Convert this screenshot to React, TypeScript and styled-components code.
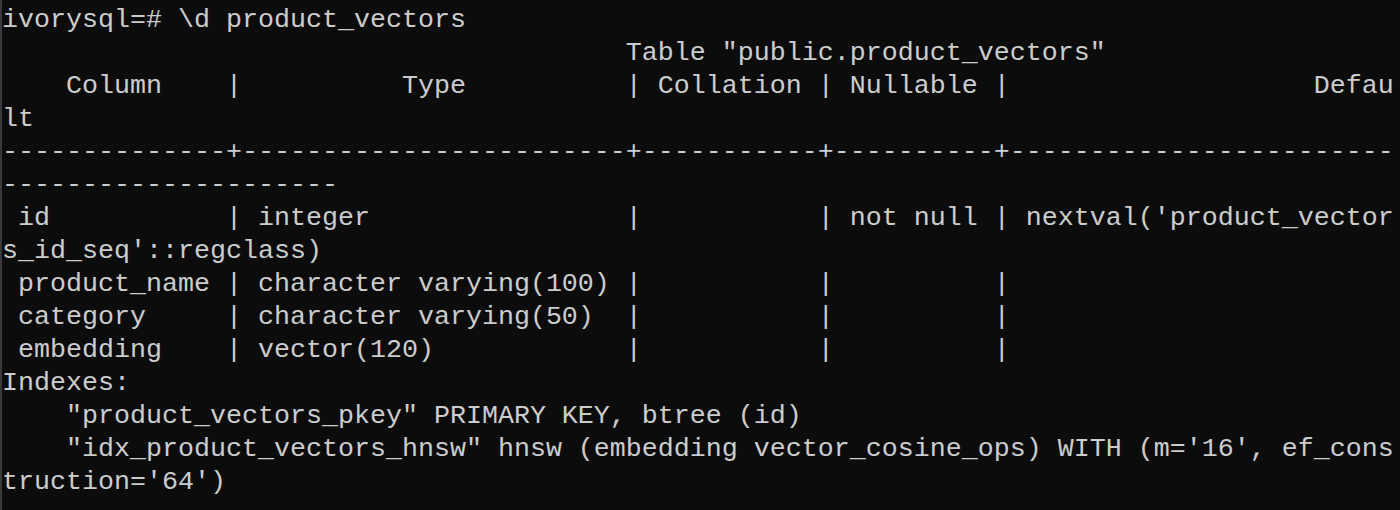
import React from "react";
import styled, { createGlobalStyle } from "styled-components";

const Global = createGlobalStyle`
  html, body {
    margin: 0;
    padding: 0;
    background: #0c0c0c;
  }
  #root {
    width: 1400px;
    height: 510px;
    overflow: hidden;
  }
`;

const Terminal = styled.div`
  box-sizing: border-box;
  width: 1400px;
  height: 510px;
  background: #0c0c0c;
  border-left: 2px solid #3a3a3a;
  padding-top: 4px;
  display: flex;
  flex-direction: column;
  overflow: hidden;
`;

const Line = styled.div`
  height: 33px;
  line-height: 33px;
  white-space: pre;
  font-family: "Liberation Mono", "DejaVu Sans Mono", monospace;
  font-size: 26.66px;
  color: #cccccc;
`;

const lines: string[] = [
  "ivorysql=# \\d product_vectors",
  "                                       Table \"public.product_vectors\"",
  "    Column    |          Type          | Collation | Nullable |                   Defau",
  "lt",
  "--------------+------------------------+-----------+----------+------------------------",
  "---------------------",
  " id           | integer                |           | not null | nextval('product_vector",
  "s_id_seq'::regclass)",
  " product_name | character varying(100) |           |          |",
  " category     | character varying(50)  |           |          |",
  " embedding    | vector(120)            |           |          |",
  "Indexes:",
  "    \"product_vectors_pkey\" PRIMARY KEY, btree (id)",
  "    \"idx_product_vectors_hnsw\" hnsw (embedding vector_cosine_ops) WITH (m='16', ef_cons",
  "truction='64')",
];

export default function App() {
  return (
    <>
      <Global />
      <Terminal>
        {lines.map((l, i) => (
          <Line key={i}>{l}</Line>
        ))}
      </Terminal>
    </>
  );
}
